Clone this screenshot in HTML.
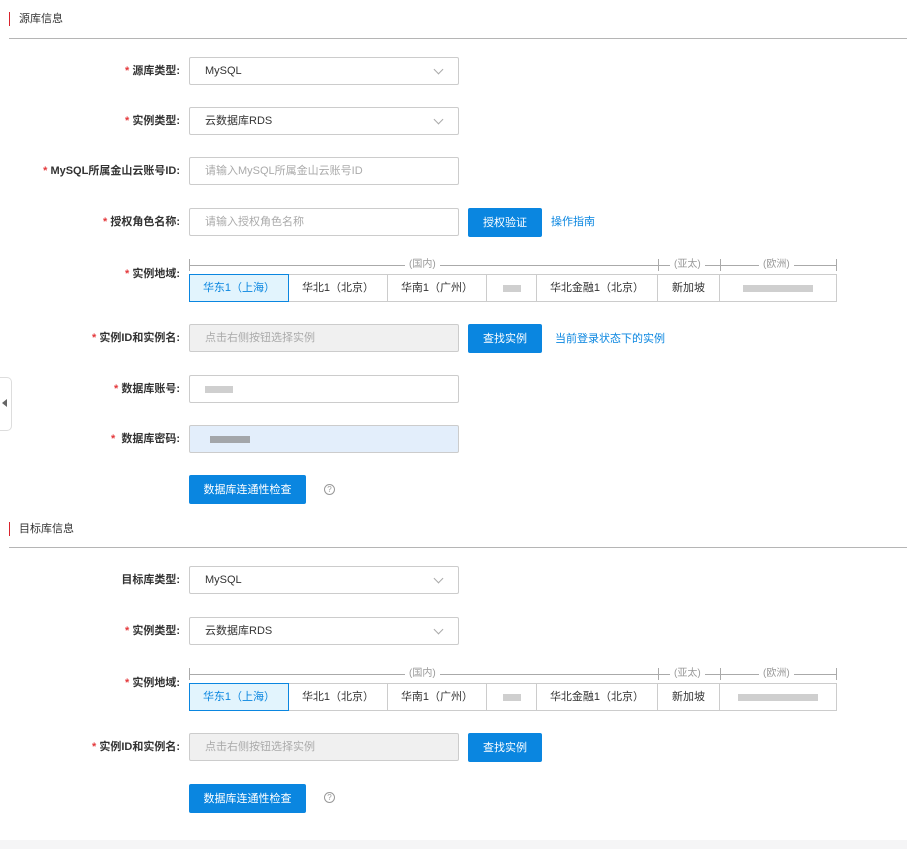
<!DOCTYPE html>
<html><head><meta charset="utf-8"><style>
*{margin:0;padding:0;box-sizing:border-box}
body{width:907px;height:849px;background:#fff;position:relative;overflow:hidden;font-family:"Liberation Sans","Noto Sans CJK SC",sans-serif;font-size:11px;color:#333}
.a{position:absolute}
.sec{position:absolute;left:9px;height:14px;border-left:1px solid #d9232d;padding-left:9px;font-size:11px;line-height:15px;color:#333}
.hl{position:absolute;left:9px;width:898px;height:1px;background:#b5b5b5}
.lab{position:absolute;right:727px;font-weight:bold;font-size:11px;line-height:29px;white-space:nowrap;color:#333}
.lab i{color:#e4393c;font-style:normal;margin-right:3px}
.in{position:absolute;left:189px;width:270px;height:28px;border:1px solid #ccc;border-radius:2px;line-height:27px;padding-left:15px;font-size:11px;color:#333}
.ph{color:#aaa}
.dis{background:#f0f0f0}
.sel:after{content:"";position:absolute;right:16px;top:8px;width:6px;height:6px;border-right:1px solid #aaa;border-bottom:1px solid #aaa;transform:rotate(45deg)}
.btn{position:absolute;height:29px;background:#0a86e0;color:#fff;font-size:11px;line-height:30px;text-align:center;border-radius:2px}
.lnk{position:absolute;color:#0a86e0;font-size:11px;line-height:30px}
.reg{position:absolute;left:189px;height:28px;width:648px;border:1px solid #ccc;display:flex}
.reg div{border-right:1px solid #ccc;text-align:center;line-height:27px;font-size:11px;color:#333}
.reg div:last-child{border-right:none}
.reg .on{background:#e2f4fd;border:1px solid #0a86e0;color:#0a86e0;margin:-1px 0 -1px -1px}
.rh{position:absolute;left:189px;width:648px;height:11px;font-size:10px;color:#999}
.rh .l{position:absolute;top:6px;height:1px;background:#aaa}
.rh .t{position:absolute;top:0;line-height:12px;background:#fff;padding:0 4px}
.rh .v{position:absolute;top:0;width:1px;height:12px;background:#aaa}
.q{position:absolute;width:11px;height:11px;border:1px solid #999;border-radius:50%;font-size:8px;line-height:9px;text-align:center;color:#999}
.blur{display:inline-block;height:7px;background:#bbb;vertical-align:middle;opacity:.7}
</style></head><body>
<div class="sec" style="top:12px">源库信息</div>
<div class="hl" style="top:38px"></div>
<div class="a" style="left:0;top:377px;width:12px;height:54px;border:1px solid #ddd;border-left:none;border-radius:0 5px 5px 0"></div>
<div class="a" style="left:2px;top:399px;width:0;height:0;border-top:4px solid transparent;border-bottom:4px solid transparent;border-right:5px solid #666"></div>

<div class="lab" style="top:57px"><i>*</i>源库类型:</div>
<div class="in sel" style="top:57px">MySQL</div>
<div class="lab" style="top:107px"><i>*</i>实例类型:</div>
<div class="in sel" style="top:107px">云数据库RDS</div>
<div class="lab" style="top:157px"><i>*</i>MySQL所属金山云账号ID:</div>
<div class="in ph" style="top:157px">请输入MySQL所属金山云账号ID</div>
<div class="lab" style="top:208px"><i>*</i>授权角色名称:</div>
<div class="in ph" style="top:208px">请输入授权角色名称</div>
<div class="btn" style="left:468px;top:208px;width:74px">授权验证</div>
<div class="lnk" style="left:551px;top:207px">操作指南</div>

<div class="lab" style="top:260px"><i>*</i>实例地域:</div>
<div class="rh" style="top:259px">
<div class="v" style="left:0"></div><div class="l" style="left:0;width:469px"></div><div class="t" style="left:216px">(国内)</div>
<div class="v" style="left:469px"></div><div class="l" style="left:469px;width:62px"></div><div class="t" style="left:481px">(亚太)</div>
<div class="v" style="left:531px"></div><div class="l" style="left:531px;width:117px"></div><div class="t" style="left:570px">(欧洲)</div>
<div class="v" style="left:647px"></div></div>
<div class="reg" style="top:274px"><div class="on" style="width:100px">华东1（上海）</div><div style="width:99px">华北1（北京）</div><div style="width:99px">华南1（广州）</div><div style="width:50px"><span class="blur" style="width:18px"></span></div><div style="width:121px">华北金融1（北京）</div><div style="width:62px">新加坡</div><div style="width:116px"><span class="blur" style="width:70px"></span></div></div>

<div class="lab" style="top:324px"><i>*</i>实例ID和实例名:</div>
<div class="in ph dis" style="top:324px">点击右侧按钮选择实例</div>
<div class="btn" style="left:468px;top:324px;width:74px">查找实例</div>
<div class="lnk" style="left:555px;top:324px">当前登录状态下的实例</div>

<div class="lab" style="top:375px"><i>*</i>数据库账号:</div>
<div class="in" style="top:375px"><span class="blur" style="width:28px"></span></div>
<div class="lab" style="top:425px"><i>*</i>&nbsp;数据库密码:</div>
<div class="in" style="top:425px;background:#e3eefb;padding-left:20px"><span class="blur" style="width:40px;background:#888"></span></div>
<div class="btn" style="left:189px;top:475px;width:117px">数据库连通性检查</div>
<div class="q" style="left:324px;top:484px">?</div>

<div class="sec" style="top:522px">目标库信息</div>
<div class="hl" style="top:547px"></div>

<div class="lab" style="top:566px">目标库类型:</div>
<div class="in sel" style="top:566px">MySQL</div>
<div class="lab" style="top:617px"><i>*</i>实例类型:</div>
<div class="in sel" style="top:617px">云数据库RDS</div>
<div class="lab" style="top:669px"><i>*</i>实例地域:</div>
<div class="rh" style="top:668px">
<div class="v" style="left:0"></div><div class="l" style="left:0;width:469px"></div><div class="t" style="left:216px">(国内)</div>
<div class="v" style="left:469px"></div><div class="l" style="left:469px;width:62px"></div><div class="t" style="left:481px">(亚太)</div>
<div class="v" style="left:531px"></div><div class="l" style="left:531px;width:117px"></div><div class="t" style="left:570px">(欧洲)</div>
<div class="v" style="left:647px"></div></div>
<div class="reg" style="top:683px"><div class="on" style="width:100px">华东1（上海）</div><div style="width:99px">华北1（北京）</div><div style="width:99px">华南1（广州）</div><div style="width:50px"><span class="blur" style="width:18px"></span></div><div style="width:121px">华北金融1（北京）</div><div style="width:62px">新加坡</div><div style="width:116px"><span class="blur" style="width:80px"></span></div></div>

<div class="lab" style="top:733px"><i>*</i>实例ID和实例名:</div>
<div class="in ph dis" style="top:733px">点击右侧按钮选择实例</div>
<div class="btn" style="left:468px;top:733px;width:74px">查找实例</div>
<div class="btn" style="left:189px;top:784px;width:117px">数据库连通性检查</div>
<div class="q" style="left:324px;top:792px">?</div>
<div class="a" style="left:0;top:840px;width:907px;height:9px;background:#f5f5f6"></div>
</body></html>
